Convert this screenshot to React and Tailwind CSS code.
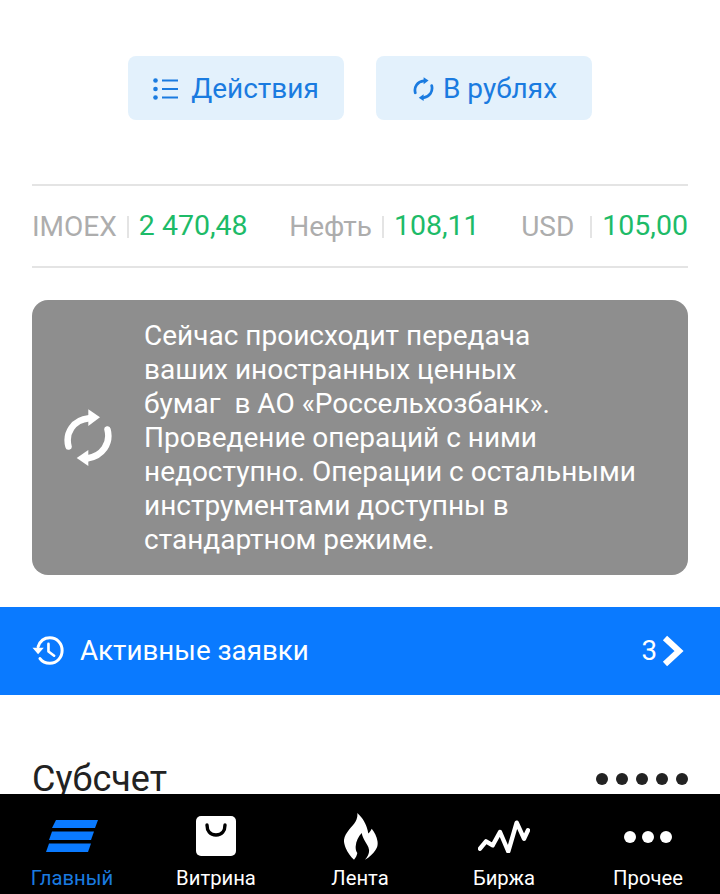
import React from "react";

function ListIcon() {
  return (
    <svg width="26" height="22" viewBox="0 0 26 22" fill="none">
      <circle cx="2.5" cy="2.5" r="2.3" fill="#1a7be0" />
      <circle cx="2.5" cy="11" r="2.3" fill="#1a7be0" />
      <circle cx="2.5" cy="19.5" r="2.3" fill="#1a7be0" />
      <path d="M9 2.5H25M9 11H25M9 19.5H25" stroke="#1a7be0" strokeWidth="2.2" />
    </svg>
  );
}

function Sync({ width, height, color }) {
  return (
    <svg width={width} height={height} viewBox="0 0 48 57" fill="none">
      <path d="M4.5 37.5C1 24 9 11 25 9.3" stroke={color} strokeWidth="6.5" strokeLinecap="round" />
      <path d="M43.5 20.5C47 34 39 47 23 49.5" stroke={color} strokeWidth="6.5" strokeLinecap="round" />
      <path d="M24.3 0.3L36 8.3L24.3 17Z" fill={color} />
      <path d="M24.3 41L12.7 49L24.3 57Z" fill={color} />
    </svg>
  );
}

function History() {
  return (
    <svg width="32" height="32" viewBox="0 0 34 34" fill="none">
      <path d="M6.5 12.5C8.5 6.5 13 3 19 3C26.5 3 32 9 32 16.5C32 24 26.5 30 19 30C14.5 30 11 28.5 8.5 25" stroke="white" strokeWidth="3.2" strokeLinecap="round" />
      <path d="M0.5 13.5H12.5L6.5 20.5Z" fill="white" />
      <path d="M17.5 9.5V17.5L23.5 22" stroke="white" strokeWidth="2.8" strokeLinecap="round" strokeLinejoin="round" />
    </svg>
  );
}

function Chevron() {
  return (
    <svg width="22" height="32" viewBox="0 0 22 32" fill="none">
      <path d="M3 3L17 16L3 29" stroke="white" strokeWidth="6.2" />
    </svg>
  );
}

function HomeIcon() {
  return (
    <svg width="52" height="32" viewBox="0 0 52 32" fill="#0a7aff">
      <path d="M10 0H52L49 8H6Z" />
      <path d="M6 11.5H48L45 20H3Z" />
      <path d="M3 23.5H45L42 32H0Z" />
    </svg>
  );
}

function BagIcon() {
  return (
    <svg width="40" height="40" viewBox="0 0 40 40" fill="none">
      <rect width="40" height="40" rx="5" fill="white" />
      <path d="M11 9C11 15 14 19 20 19C26 19 29 15 29 9" stroke="black" strokeWidth="3.4" strokeLinecap="round" />
    </svg>
  );
}

function FlameIcon() {
  return (
    <svg className="ml-[2px]" width="34" height="47" viewBox="0 0 34 47" fill="white">
      <path d="M13.3 0C16 3 18.5 5 20 8.3C22 12 23.7 16 24.3 20.5C25.7 19 27 17.5 27.7 15.7C30.5 19 32.8 23.5 33.5 28.3C34 32 33.3 34.5 31.7 36.7C29 41 25.5 44 21 46.7C24 43 25.5 40 25 36.7C24.5 33.5 22.5 31 21 28.3C19.5 25.5 18.3 23 17.7 20C14.5 23.5 12 28 11.7 33.3C11.5 36 12 38 13.3 40C13 42.5 11.5 45 10 46.7C6.5 43.5 3.5 39.5 1.7 35C0.5 32 -0.2 29.5 0 26.7C0.5 23 2.5 20 5 16.7C7.5 13.5 10 11.5 11.7 8.3C13 5.5 13.7 3 13.3 0Z" />
    </svg>
  );
}

function PulseIcon() {
  return (
    <svg width="52" height="34" viewBox="0 0 52 34" fill="none">
      <path d="M2 29.7L8 22.3L14.7 26.3L22 13L30.3 32.3L38.7 3.7L46 19.7L50 11.3" stroke="white" strokeWidth="4.4" strokeLinecap="round" strokeLinejoin="round" />
    </svg>
  );
}

function DotsIcon() {
  return (
    <div className="flex gap-[6px] pt-[2px]">
      <div className="w-3 h-3 rounded-full bg-white" />
      <div className="w-3 h-3 rounded-full bg-white" />
      <div className="w-3 h-3 rounded-full bg-white" />
    </div>
  );
}

function Ticker({ label, value, wide }) {
  return (
    <div className="flex items-center pt-[1px]">
      <span className="text-[#adadad] text-[28px]">{label}</span>
      <span className={`w-[2px] h-[22px] bg-[#e4e4e4] mr-[10px] ${wide ? "ml-[16px]" : "ml-[10px]"}`} />
      <span className="text-[#1dbb68] text-[28.5px]">{value}</span>
    </div>
  );
}

function NavItem({ icon, label, active }) {
  return (
    <div className="w-[144px] flex flex-col items-center pt-[12px]">
      <div className="h-[60px] flex items-center justify-center">{icon}</div>
      <span className={`text-[20.25px] leading-[24px] ${active ? "text-[#1a7be0]" : "text-white"}`}>{label}</span>
    </div>
  );
}

export default function App() {
  return (
    <div className="w-[720px] h-[894px] bg-white flex flex-col overflow-hidden font-['Roboto',sans-serif]">
      <main className="flex-1 min-h-0 overflow-hidden flex flex-col pt-[56px]">
        <div className="flex justify-center gap-8 shrink-0">
          <div className="w-[216px] h-[64px] pt-[2px] rounded-[8px] bg-[#e3f1fc] flex items-center justify-center gap-[12px] text-[#1a7be0] text-[28px]">
            <ListIcon />
            <span>Действия</span>
          </div>
          <div className="w-[216px] h-[64px] pt-[2px] pl-[2px] rounded-[8px] bg-[#e3f1fc] flex items-center justify-center gap-[9px] text-[#1a7be0] text-[28px]">
            <Sync width={21} height={24} color="#1a7be0" />
            <span>В рублях</span>
          </div>
        </div>

        <div className="mx-8 mt-16 h-[84px] shrink-0 border-y-2 border-[#e4e4e4] flex items-center justify-between">
          <Ticker label="IMOEX" value="2 470,48" />
          <Ticker label="Нефть" value="108,11" />
          <Ticker label="USD" value="105,00" wide />
        </div>

        <div className="mx-8 mt-8 h-[275px] shrink-0 rounded-[16px] bg-[#8e8e8e] flex items-center">
          <div className="w-[112px] flex justify-center shrink-0">
            <Sync width={48} height={57} color="white" />
          </div>
          <p className="text-[28px] leading-[34px] text-white whitespace-pre">
            {"Сейчас происходит передача\nваших иностранных ценных\nбумаг  в АО «Россельхозбанк».\nПроведение операций с ними\nнедоступно. Операции с остальными\nинструментами доступны в\nстандартном режиме."}
          </p>
        </div>

        <div className="mt-8 h-[88px] bg-[#0a7aff] flex items-center pl-8 pr-[36px] text-white text-[27.75px] shrink-0">
          <History />
          <span className="ml-[16px]">Активные заявки</span>
          <span className="ml-auto mr-[5px]">3</span>
          <Chevron />
        </div>

        <div className="mt-[62px] mx-8 flex items-center justify-between shrink-0">
          <span className="text-[36px] leading-[44px] text-[#222]">Субсчет</span>
          <div className="flex gap-2">
            <div className="w-3 h-3 rounded-full bg-[#222]" />
            <div className="w-3 h-3 rounded-full bg-[#222]" />
            <div className="w-3 h-3 rounded-full bg-[#222]" />
            <div className="w-3 h-3 rounded-full bg-[#222]" />
            <div className="w-3 h-3 rounded-full bg-[#222]" />
          </div>
        </div>
      </main>
      <nav className="h-[100px] shrink-0 bg-black flex">
        <NavItem icon={<HomeIcon />} label="Главный" active />
        <NavItem icon={<BagIcon />} label="Витрина" />
        <NavItem icon={<FlameIcon />} label="Лента" />
        <NavItem icon={<PulseIcon />} label="Биржа" />
        <NavItem icon={<DotsIcon />} label="Прочее" />
      </nav>
    </div>
  );
}
